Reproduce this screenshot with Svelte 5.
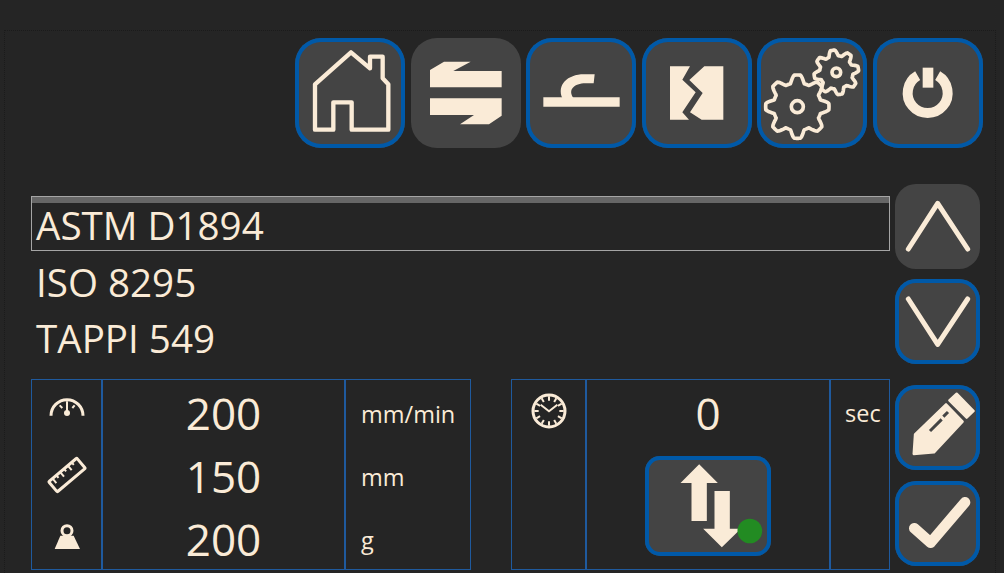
<script>
  function gear(cx, cy, outer, inner, teeth, rot = 0) {
    const pts = [];
    const n = teeth * 24;
    for (let i = 0; i < n; i++) {
      const t = (i / n) * Math.PI * 2;
      const s = Math.cos(t * teeth);
      const k = Math.max(-1, Math.min(1, s * 1.5));
      const r = inner + ((outer - inner) * (k + 1)) / 2;
      const a = t + rot;
      pts.push(`${(cx + r * Math.sin(a)).toFixed(1)},${(cy - r * Math.cos(a)).toFixed(1)}`);
    }
    return 'M' + pts.join('L') + 'Z';
  }
  const bigGear = gear(490, 245, 95, 72, 8);
  const smallGear = gear(607, 142, 67, 50, 8, -0.17);
  const clockTicks = Array.from({ length: 12 }, (_, i) => i * 30);
</script>

<div class="frame">
  <nav class="top">
    <button class="btn big on" aria-label="Home">
      <svg viewBox="15 39 330 330"><path class="line" d="M183 82L75 178V314H130V232H185V314H295V178L278 160V95H240V130Z" /></svg>
    </button>
    <button class="btn big" aria-label="Transfer">
      <svg viewBox="363 39 330 330"><path class="fill" d="M420 187V135L462 110H542L490 138H635V187Z" /><path class="fill" d="M420 220H635V272L597 298H510L552 270H420Z" /></svg>
    </button>
    <button class="btn big on" aria-label="Peel">
      <svg viewBox="711 39 330 330"><path class="fill" d="M763 217H992V245H763Z" /><path class="fill" d="M917 148H885C835 148 803 180 820 220H854C835 195 855 175 890 175H914Z" /></svg>
    </button>
    <button class="btn big on" aria-label="Tear">
      <svg viewBox="21 39 330 330"><path class="fill" d="M105 124H165L142 164L182 202L142 262L162 284H105Z" /><path class="fill" d="M208 124H265V284H200L165 262L203 204L163 165Z" /></svg>
    </button>
    <button class="btn big on" aria-label="Settings">
      <svg viewBox="369 39 330 330">
        <path class="gear" d={bigGear} /><circle class="gear" cx="490" cy="245" r="18" />
        <path class="gear" d={smallGear} /><circle class="gear" cx="607" cy="142" r="13" />
      </svg>
    </button>
    <button class="btn big on" aria-label="Power">
      <svg viewBox="714 39 330 330">
        <path class="ring" d="M848 152A60 60 0 1 0 908 152" /><path class="fill" d="M863 128H895V188H863Z" />
      </svg>
    </button>
  </nav>

  <div class="body">
    <div class="left">
      <ul class="list">
        <li class="sel">ASTM D1894</li>
        <li>ISO 8295</li>
        <li>TAPPI 549</li>
      </ul>
      <div class="tables">
        <section class="table t1">
          <div class="cell icons">
            <svg viewBox="72 60 120 120">
              <path class="thin" d="M84 131A48 48 0 0 1 180 131" />
              <path class="thin n" d="M132 88V122M110 100L118 108M155 100L148 108" />
              <circle class="fill" cx="132" cy="123" r="9" />
            </svg>
            <svg viewBox="72 254 120 120">
              <g transform="rotate(-40 132 314)">
                <rect class="thin" x="77" y="294" width="110" height="40" rx="3" />
                <path class="thin n" d="M92 294V312M107 294V304M122 294V312M137 294V304M152 294V312M167 294V304" />
              </g>
            </svg>
            <svg viewBox="72 450 120 120">
              <circle class="thin" cx="132" cy="488" r="15" />
              <path class="fill" d="M112 503H152L171 543H95Z" />
            </svg>
          </div>
          <div class="cell vals"><span>200</span><span>150</span><span>200</span></div>
          <div class="cell units"><span>mm/min</span><span>mm</span><span>g</span></div>
        </section>
        <section class="table t2">
          <div class="cell clock">
            <svg viewBox="85 63 120 120">
              <circle class="thin" cx="145" cy="123" r="48" />
              {#each clockTicks as a}
                <path class="thin n" transform="rotate({a} 145 123)" d="M145 79V92" />
              {/each}
              <path class="thin n" d="M120 104L145 124L170 104" />
            </svg>
          </div>
          <div class="cell mid">
            <span class="val0">0</span>
            <button class="btn go on" aria-label="Transfer direction">
              <svg viewBox="435 260 377 300">
                <path class="fill" d="M597 285L653 341H620V455H574V341H541Z" />
                <path class="fill" d="M643 365H689V478H722L665 534L609 478H643Z" />
                <circle cx="749" cy="485" r="37" fill="#228b22" />
              </svg>
            </button>
          </div>
          <div class="cell sec">sec</div>
        </section>
      </div>
    </div>

    <aside class="side">
      <button class="btn small" aria-label="Up">
        <svg viewBox="225 27 255 255"><path class="chev" d="M265 222L353 85L443 222" /></svg>
      </button>
      <button class="btn small on s2" aria-label="Down">
        <svg viewBox="225 312 255 255"><path class="chev" d="M265 372L353 508L443 372" /></svg>
      </button>
      <button class="btn small on s3" aria-label="Edit">
        <svg viewBox="225 30 255 255">
          <path class="fill soft" d="M410 56L461 108L440 128L388 76Z" />
          <path class="fill soft" d="M378 88L428 140L342 232L281 237L285 178Z" />
          <path class="slot" d="M330 168L365 133M370 125L384 111" />
        </svg>
      </button>
      <button class="btn small on s4" aria-label="Confirm">
        <svg viewBox="225 318 255 255"><path class="check" d="M283 460L332 503L435 382" /></svg>
      </button>
    </aside>
  </div>
</div>

<style>
  :global(body) {
    margin: 0;
    background: #252525;
  }
  .frame {
    width: 1000px;
    height: 573px;
    box-sizing: border-box;
    margin-left: 4px;
    padding-top: 30px;
    font-family: "Open Sans", "Noto Sans", sans-serif;
    color: #faebd7;
    position: relative;
    overflow: hidden;
  }
  .frame::before {
    content: "";
    display: block;
    position: absolute;
    left: 0;
    top: 30px;
    right: 8px;
    bottom: -4px;
    border: 1px dotted #1b1b1b;
    pointer-events: none;
  }
  .top {
    display: flex;
    justify-content: flex-end;
    gap: 5.6px;
    padding: 8px 21px 0 0;
  }
  .btn {
    display: block;
    border: 0;
    padding: 0;
    margin: 0;
    background: #444;
    flex: none;
  }
  .btn svg {
    display: block;
    width: 100%;
    height: 100%;
  }
  .btn.on {
    box-shadow: inset 0 0 0 4px #0059a8;
  }
  .big {
    width: 110px;
    height: 110px;
    border-radius: 26px;
  }
  .small {
    width: 85px;
    height: 85px;
    border-radius: 21px;
  }
  .go {
    width: 126px;
    height: 100px;
    border-radius: 15px;
  }
  .fill {
    fill: #faebd7;
  }
  .soft {
    stroke: #faebd7;
    stroke-width: 7;
    stroke-linejoin: round;
  }
  .line {
    fill: none;
    stroke: #faebd7;
    stroke-width: 13;
    stroke-linejoin: round;
  }
  .gear {
    fill: none;
    stroke: #faebd7;
    stroke-width: 11;
    stroke-linejoin: round;
  }
  .ring {
    fill: none;
    stroke: #faebd7;
    stroke-width: 30;
  }
  .chev {
    fill: none;
    stroke: #faebd7;
    stroke-width: 15;
    stroke-linecap: round;
    stroke-linejoin: round;
  }
  .check {
    fill: none;
    stroke: #faebd7;
    stroke-width: 32;
    stroke-linecap: round;
    stroke-linejoin: round;
  }
  .slot {
    fill: none;
    stroke: #444;
    stroke-width: 9;
  }
  .thin {
    fill: none;
    stroke: #faebd7;
    stroke-width: 9;
  }
  .thin.n {
    stroke-width: 6;
  }
  .body {
    display: flex;
    gap: 5px;
    padding: 36px 0 0 27px;
  }
  .left {
    width: 859px;
    padding-top: 12px;
  }
  .list {
    list-style: none;
    margin: 0;
    padding: 0;
    font-size: 38.6px;
  }
  .list li {
    height: 56px;
    line-height: 62px;
    box-sizing: border-box;
    padding-left: 5px;
    white-space: nowrap;
  }
  .list .sel {
    height: 55px;
    line-height: 56px;
    border: 1px solid #a5a5a5;
    background: linear-gradient(#666, #666) top / 100% 6px no-repeat;
    padding-left: 4px;
  }
  .tables {
    display: flex;
    justify-content: space-between;
    margin-top: 16px;
    height: 191px;
  }
  .table {
    display: grid;
    box-sizing: border-box;
    height: 191px;
    border: 1px solid #1f5a9e;
  }
  .t1 {
    width: 440px;
    grid-template-columns: 69px 243px 1fr;
  }
  .t2 {
    width: 379px;
    grid-template-columns: 73px 244px 1fr;
  }
  .cell + .cell {
    border-left: 2px solid #1f5a9e;
  }
  .icons,
  .vals,
  .units {
    display: grid;
    grid-template-rows: repeat(3, 1fr);
    align-items: center;
  }
  .icons svg {
    width: 40px;
    height: 40px;
    justify-self: center;
  }
  .vals span {
    text-align: center;
    font-size: 44px;
    line-height: 1;
    padding-top: 3px;
  }
  .units span {
    padding: 6px 0 0 15px;
    font-size: 23.5px;
    line-height: 1;
  }
  .clock {
    padding-top: 11px;
    display: flex;
    justify-content: center;
    align-items: flex-start;
  }
  .clock svg {
    width: 40px;
    height: 40px;
  }
  .mid {
    display: flex;
    flex-direction: column;
    align-items: center;
  }
  .val0 {
    font-size: 44px;
    line-height: 1;
    padding-top: 11px;
  }
  .mid .go {
    margin-top: 21px;
  }
  .sec {
    font-size: 23.5px;
    line-height: 1;
    padding: 22px 0 0 14px;
  }
  .side {
    display: flex;
    flex-direction: column;
    width: 85px;
    flex: none;
  }
  .side .s2 {
    margin-top: 10px;
  }
  .side .s3 {
    margin-top: 21px;
  }
  .side .s4 {
    margin-top: 11px;
  }
</style>
